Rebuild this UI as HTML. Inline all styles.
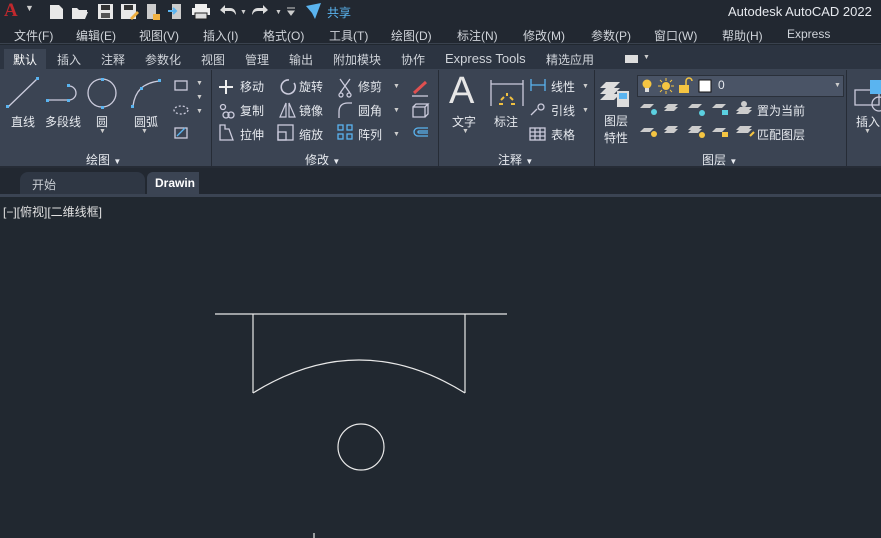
<!DOCTYPE html>
<html><head><meta charset="utf-8"><style>
*{margin:0;padding:0;box-sizing:border-box}
body{width:881px;height:538px;overflow:hidden;background:#212830;font-family:"Liberation Sans","Noto Sans CJK SC",sans-serif;color:#e6e9ee;position:relative}
.a{position:absolute;white-space:nowrap}
.t{font-size:12px}
svg{position:absolute;overflow:visible}
</style></head><body>
<div class="a" style="left:0;top:0;width:881px;height:23px;background:#222831"></div>
<div class="a" style="left:0;top:23px;width:881px;height:21px;background:#222831;border-bottom:1px solid #3a424e"></div>
<div class="a" style="left:4px;top:0;font-size:19px;font-weight:bold;color:#c0282d;font-family:'Liberation Serif',serif">A</div>
<div class="a" style="left:25px;top:3px;font-size:9px;color:#ccc">▼</div>
<svg style="left:50px;top:3px" width="260" height="18">
<path d="M0 2h9l4 4v10H0z" fill="#e8e8e8"/>
<path d="M22 5h5l2 2h8v2H25l-3 7z M25 9h13l-3 7H22z" fill="#e8e8e8"/>
<rect x="48" y="1" width="15" height="15" fill="#e8e8e8"/><rect x="51" y="2" width="9" height="5" fill="#333"/><rect x="51" y="10" width="9" height="5" fill="#555"/>
<rect x="71" y="1" width="15" height="15" fill="#e8e8e8"/><rect x="74" y="2" width="9" height="5" fill="#333"/><path d="M80 15l7-7 2 2-7 7z" fill="#f0b040"/>
<rect x="97" y="1" width="9" height="15" fill="#ccc"/><path d="M103 11h7v6h-7z" fill="#f0b040"/>
<rect x="122" y="1" width="9" height="15" fill="#ccc"/><path d="M118 8h8M123 5l3 3-3 3" stroke="#5ab4f0" stroke-width="2" fill="none"/>
<rect x="145" y="1" width="12" height="4" fill="#eee"/><rect x="142" y="5" width="18" height="7" fill="#eee"/><rect x="145" y="10" width="12" height="6" fill="#ddd" stroke="#222"/>
<path d="M170 7l5-5v3h5c4 0 6 3 6 7-2-3-3-4-6-4h-5v3z" fill="#ddd"/>
<text x="190" y="11" font-size="7" fill="#ccc">▼</text>
<path d="M218 7l-5-5v3h-5c-4 0-6 3-6 7 2-3 3-4 6-4h5v3z" fill="#ddd"/>
<text x="225" y="11" font-size="7" fill="#ccc">▼</text>
<path d="M237 5h8M238 8h6l-3 4z" stroke="#ccc" fill="#ccc"/>
<path d="M256 3l15-3-6 16-3-6z" fill="#5ab4f0"/>
</svg>
<div class="a t" style="left:327px;top:4px;color:#5ab4f0">共享</div>
<div class="a" style="left:728px;top:4px;font-size:13px;color:#e6e9ee">Autodesk AutoCAD 2022</div>
<div class="a t" style="top:27px;left:0;width:881px;color:#d0d4da">
<span class="a" style="left:14px">文件(F)</span><span class="a" style="left:76px">编辑(E)</span><span class="a" style="left:139px">视图(V)</span><span class="a" style="left:203px">插入(I)</span><span class="a" style="left:263px">格式(O)</span><span class="a" style="left:329px">工具(T)</span><span class="a" style="left:391px">绘图(D)</span><span class="a" style="left:457px">标注(N)</span><span class="a" style="left:523px">修改(M)</span><span class="a" style="left:591px">参数(P)</span><span class="a" style="left:654px">窗口(W)</span><span class="a" style="left:722px">帮助(H)</span><span class="a" style="left:787px">Express</span></div>
<div class="a" style="left:0;top:45px;width:881px;height:24px;background:#2c3441"></div>
<div class="a" style="left:4px;top:49px;width:42px;height:20px;background:#3b4453"></div>
<div class="a t" style="top:51px;left:0;color:#d0d4da">
<span class="a" style="left:13px;color:#fff">默认</span><span class="a" style="left:57px">插入</span><span class="a" style="left:101px">注释</span><span class="a" style="left:145px">参数化</span><span class="a" style="left:201px">视图</span><span class="a" style="left:245px">管理</span><span class="a" style="left:289px">输出</span><span class="a" style="left:333px">附加模块</span><span class="a" style="left:401px">协作</span><span class="a" style="left:445px;font-size:13px">Express Tools</span><span class="a" style="left:546px">精选应用</span></div>
<div class="a" style="left:625px;top:55px;width:13px;height:8px;background:#ddd"></div>
<div class="a" style="left:643px;top:54px;font-size:7px;color:#ccc">▼</div>
<div class="a" style="left:0;top:69px;width:881px;height:99px;background:#3b4453"></div>
<div class="a" style="left:211px;top:70px;width:1px;height:96px;background:#262c36"></div>
<div class="a" style="left:438px;top:70px;width:1px;height:96px;background:#262c36"></div>
<div class="a" style="left:594px;top:70px;width:1px;height:96px;background:#262c36"></div>
<div class="a" style="left:846px;top:70px;width:1px;height:96px;background:#262c36"></div>
<div class="a" style="left:0;top:166px;width:881px;height:2px;background:#262c36"></div>
<svg style="left:0;top:70px" width="881" height="95" fill="none" stroke="#ccd" stroke-width="1.3">
<path d="M8 37L37 9"/><rect x="6" y="35" width="3" height="3" fill="#5ab4f0" stroke="none"/><rect x="36" y="7" width="3" height="3" fill="#5ab4f0" stroke="none"/>
<path d="M48 30h20M69 16a7 7 0 0 1 0 14"/><rect x="46" y="29" width="3" height="3" fill="#5ab4f0" stroke="none"/><rect x="67" y="29" width="3" height="3" fill="#5ab4f0" stroke="none"/><rect x="67" y="14" width="3" height="3" fill="#5ab4f0" stroke="none"/>
<circle cx="102" cy="23" r="14"/><rect x="101" y="8" width="3" height="3" fill="#5ab4f0" stroke="none"/><rect x="101" y="36" width="3" height="3" fill="#5ab4f0" stroke="none"/>
<path d="M133 36c2-15 10-23 26-25"/><rect x="131" y="35" width="3" height="3" fill="#5ab4f0" stroke="none"/><rect x="140" y="17" width="3" height="3" fill="#5ab4f0" stroke="none"/><rect x="158" y="9" width="3" height="3" fill="#5ab4f0" stroke="none"/>
<rect x="175" y="11" width="12" height="9"/><ellipse cx="181" cy="40" rx="7" ry="4" stroke-dasharray="2 2"/><rect x="175" y="58" width="12" height="10"/><path d="M177 66l8-8" stroke="#5ab4f0"/>
<path d="M226 10v14M219 17h14" stroke="#eee" stroke-width="2"/>
<path d="M289 10a7 7 0 1 0 5 3" stroke-width="1.6"/>
<path d="M340 9l10 14M350 9l-10 14"/><circle cx="341" cy="25" r="2"/><circle cx="349" cy="25" r="2"/>
<path d="M414 23l12-11" stroke="#e05050" stroke-width="3"/><path d="M412 26h16"/>
<circle cx="223" cy="37" r="2.5"/><circle cx="226" cy="45" r="3"/><circle cx="231" cy="45" r="3"/>
<path d="M286 33l-6 14h6zM289 33l6 14h-6z" stroke-width="1.2"/>
<path d="M339 48v-6c0-6 3-9 9-9h4"/>
<path d="M413 37h12v10h-12zM413 37l3-3h12l-3 3M428 34v10l-3 3"/>
<path d="M220 55v15h13l-4-11h-4v-4z"/>
<rect x="278" y="55" width="15" height="15"/><rect x="278" y="62" width="8" height="8"/>
<g stroke="#5ab4f0"><rect x="338" y="55" width="5" height="5"/><rect x="347" y="55" width="5" height="5"/><rect x="338" y="64" width="5" height="5"/><rect x="347" y="64" width="5" height="5"/></g>
<path d="M428 58h-10a4 4 0 0 0 0 8h10M428 61h-9a1 1 0 0 0 0 2h9" stroke="#5ab4f0"/>
<path d="M491 10v26M523 10v26M491 14h32" /><path d="M501 30l3-3M507 26v-3M513 30l-3-3M499 34h4M511 34h4" stroke="#f0c040" stroke-width="2"/>
<path d="M531 9v12M545 9v12M531 15h14" stroke="#5ab4f0"/>
<path d="M531 45l6-6"/><circle cx="541" cy="37" r="3"/>
<rect x="530" y="58" width="15" height="12"/><path d="M530 62h15M530 66h15M535 58v12M540 58v12"/>
<path d="M600 24l6-6h14l-6 6zM600 30l6-6h14l-6 6zM600 18l6-6h14l-6 6z" fill="#ddd" stroke="none"/><rect x="617" y="21" width="12" height="16" fill="#ddd" stroke="none"/><rect x="619" y="23" width="8" height="6" fill="#5ab4f0" stroke="none"/>
<path d="M855 20h24v15h-24z"/><circle cx="879" cy="34" r="7"/><path d="M870 10h11v14h-11z" fill="#5ab4f0" stroke="none"/>
</svg>
<div class="a t" style="left:11px;top:113px">直线</div>
<div class="a t" style="left:45px;top:113px">多段线</div>
<div class="a t" style="left:96px;top:113px">圆</div>
<div class="a t" style="left:134px;top:113px">圆弧</div>
<div class="a" style="left:99px;top:128px;font-size:7px;color:#ccc">▼</div>
<div class="a" style="left:141px;top:128px;font-size:7px;color:#ccc">▼</div>
<div class="a" style="left:196px;top:80px;font-size:7px;color:#ccc">▼<br><br>▼<br><br>▼</div>
<div class="a t" style="left:86px;top:151px">绘图 <span style="font-size:8px">▼</span></div>
<div class="a t" style="left:240px;top:75px;line-height:24px">移动<br>复制<br>拉伸</div>
<div class="a t" style="left:299px;top:75px;line-height:24px">旋转<br>镜像<br>缩放</div>
<div class="a t" style="left:358px;top:75px;line-height:24px">修剪<br>圆角<br>阵列</div>
<div class="a" style="left:393px;top:81px;font-size:7px;color:#ccc;line-height:12px">▼<br><br>▼<br><br>▼</div>
<div class="a t" style="left:305px;top:151px">修改 <span style="font-size:8px">▼</span></div>
<div class="a" style="left:449px;top:70px;font-size:38px;color:#e6e6e6">A</div>
<div class="a t" style="left:452px;top:113px">文字</div>
<div class="a t" style="left:494px;top:113px">标注</div>
<div class="a" style="left:462px;top:128px;font-size:7px;color:#ccc">▼</div>
<div class="a t" style="left:551px;top:75px;line-height:24px">线性<br>引线<br>表格</div>
<div class="a" style="left:582px;top:81px;font-size:7px;color:#ccc;line-height:12px">▼<br><br>▼</div>
<div class="a t" style="left:498px;top:151px">注释 <span style="font-size:8px">▼</span></div>
<div class="a t" style="left:604px;top:113px;line-height:17px">图层<br>特性</div>
<div class="a" style="left:637px;top:75px;width:207px;height:22px;background:#4a5466;border:1px solid #2a303a"></div>
<svg style="left:640px;top:78px" width="100" height="16"><circle cx="7" cy="6" r="4.5" fill="#f5c542"/><rect x="5" y="10" width="4" height="4" fill="#ddd"/><circle cx="26" cy="8" r="4" fill="#f5c542"/><path d="M26 0v3M26 13v3M18 8h3M31 8h3M20 2l2 2M30 12l2 2M20 14l2-2M30 4l2-2" stroke="#f5c542"/><rect x="39" y="7" width="10" height="8" fill="#f5c542"/><path d="M46 7V3a3 3 0 0 1 6 0" stroke="#f5c542" fill="none" stroke-width="1.5"/><rect x="59" y="2" width="12" height="12" fill="#fff" stroke="#111"/></svg>
<div class="a t" style="left:718px;top:78px">0</div>
<div class="a" style="left:834px;top:82px;font-size:7px;color:#ccc">▼</div>
<svg style="left:640px;top:100px" width="110" height="40"><g fill="#ccc"><path d="M0 8l4-4h10l-4 4z"/><path d="M24 8l4-4h10l-4 4zM24 11l4-4h10l-4 4z"/><path d="M48 8l4-4h10l-4 4z"/><path d="M72 8l4-4h10l-4 4z"/><path d="M96 11l4-4h12l-4 4zM96 14l4-4h12l-4 4z"/>
<path d="M0 32l4-4h10l-4 4z"/><path d="M24 30l4-4h10l-4 4zM24 33l4-4h10l-4 4z"/><path d="M48 30l4-4h10l-4 4zM48 33l4-4h10l-4 4z"/><path d="M72 32l4-4h10l-4 4z"/><path d="M96 30l4-4h12l-4 4zM96 33l4-4h12l-4 4z"/></g>
<circle cx="14" cy="12" r="3" fill="#5bd0e0"/><circle cx="62" cy="13" r="3" fill="#5bd0e0"/><rect x="82" y="10" width="6" height="5" fill="#5bd0e0"/><circle cx="104" cy="4" r="3" fill="#ccc"/>
<circle cx="14" cy="34" r="3" fill="#f5c542"/><circle cx="62" cy="35" r="3" fill="#f5c542"/><rect x="82" y="32" width="6" height="5" fill="#f5c542"/><path d="M110 36l4-4" stroke="#f5c542" stroke-width="2"/></svg>
<div class="a t" style="left:757px;top:102px">置为当前</div>
<div class="a t" style="left:757px;top:126px">匹配图层</div>
<div class="a t" style="left:702px;top:151px">图层 <span style="font-size:8px">▼</span></div>
<div class="a t" style="left:856px;top:113px">插入</div>
<div class="a" style="left:864px;top:128px;font-size:7px;color:#ccc">▼</div>
<div class="a" style="left:0;top:168px;width:881px;height:27px;background:#222831"></div>
<div class="a" style="left:20px;top:172px;width:125px;height:22px;background:#2f3744;border-radius:8px 8px 0 0"></div>
<div class="a t" style="left:32px;top:176px;color:#c8ccd2">开始</div>
<div class="a" style="left:147px;top:172px;width:52px;height:22px;background:#3b4453;border-radius:6px 0 0 0"></div>
<div class="a" style="left:155px;top:176px;font-size:12px;font-weight:bold;color:#fff">Drawin</div>
<div class="a" style="left:0;top:194px;width:881px;height:3px;background:#3b4453"></div>
<div class="a t" style="left:3px;top:203px;color:#e0e0e0">[−][俯视][二维线框]</div>
<svg style="left:0;top:0" width="881" height="538" fill="none" stroke="#e8e8e8" stroke-width="1.2">
<path d="M215 314H507M253 314V393M465 314V393M253 393Q359 327 465 393"/>
<circle cx="361" cy="447" r="23"/>
<path d="M314 533v5"/>
</svg>
</body></html>
